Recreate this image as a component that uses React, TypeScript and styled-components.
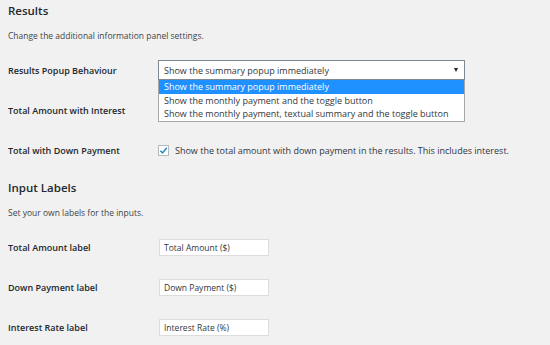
import styled, { createGlobalStyle } from "styled-components";

const GlobalStyle = createGlobalStyle`
    html, body {
        margin: 0;
        padding: 0;
        background: #f1f1f1;
    }
    body {
        font-family: "Open Sans", "Noto Sans", sans-serif;
        color: #23282d;
    }
`;

const Page = styled.div`
    padding: 0 8px;
    width: 534px;
`;

const Heading = styled.h2<{ top?: number }>`
    margin: ${props => props.top || 0}px 0 0;
    height: 22px;
    line-height: 22px;
    font-size: 11.5px;
    font-weight: 600;
    color: #23282d;
`;

const Description = styled.p`
    margin: 0;
    height: 28px;
    line-height: 28px;
    font-size: 8.5px;
    color: #444;
`;

const Table = styled.div`
    display: flex;
    flex-direction: column;
`;

const Row = styled.div`
    display: grid;
    grid-template-columns: 150px 1fr;
    align-items: center;
    height: 40px;
`;

const Label = styled.div`
    font-size: 9px;
    font-weight: 600;
    color: #23282d;
`;

const SelectWrap = styled.div`
    position: relative;
    width: 307px;
`;

const SelectBox = styled.div`
    box-sizing: border-box;
    height: 20px;
    border: 1px solid #7e8993;
    background: #fff;
    display: flex;
    align-items: center;
    justify-content: space-between;
    padding: 0 6px 0 5px;
    font-size: 9px;
    color: #32373c;
`;

const Arrow = styled.span`
    width: 0;
    height: 0;
    border-left: 2.5px solid transparent;
    border-right: 2.5px solid transparent;
    border-top: 4px solid #222;
`;

const Menu = styled.ul`
    position: absolute;
    left: 0;
    top: 20px;
    width: 307px;
    box-sizing: border-box;
    margin: 0;
    padding: 0;
    list-style: none;
    background: #fff;
    border: 1px solid #a8a8a8;
    border-top: none;
    z-index: 2;
`;

const Option = styled.li<{ active?: boolean }>`
    height: 13.5px;
    line-height: 13.5px;
    padding: 0 5px;
    font-size: 9px;
    background: ${props => props.active ? "#1e90ff" : "#fff"};
    color: ${props => props.active ? "#fff" : "#32373c"};
`;

const CheckLine = styled.label`
    display: flex;
    align-items: center;
    gap: 6px;
    font-size: 9px;
    color: #32373c;
`;

const Box = styled.span`
    box-sizing: border-box;
    width: 11px;
    height: 11px;
    border: 1px solid #b4b9be;
    background: #fff;
    display: flex;
    align-items: center;
    justify-content: center;
`;

const TextInput = styled.input`
    box-sizing: border-box;
    width: 110px;
    height: 17px;
    margin-left: 1px;
    border: 1px solid #ddd;
    background: #fff;
    padding: 0 4px;
    font-family: inherit;
    font-size: 8.5px;
    color: #32373c;
    outline: none;
`;

const options = [
    "Show the summary popup immediately",
    "Show the monthly payment and the toggle button",
    "Show the monthly payment, textual summary and the toggle button",
];

export default function App() {
    return (
        <Page>
            <GlobalStyle />
            <Heading>Results</Heading>
            <Description>Change the additional information panel settings.</Description>
            <Table>
                <Row>
                    <Label>Results Popup Behaviour</Label>
                    <SelectWrap>
                        <SelectBox>
                            <span>{options[0]}</span>
                            <Arrow />
                        </SelectBox>
                        <Menu>
                            {options.map((o, i) => (
                                <Option key={o} active={i === 0}>{o}</Option>
                            ))}
                        </Menu>
                    </SelectWrap>
                </Row>
                <Row>
                    <Label>Total Amount with Interest</Label>
                    <div />
                </Row>
                <Row>
                    <Label>Total with Down Payment</Label>
                    <CheckLine>
                        <Box>
                            <svg width="9" height="9" viewBox="0 0 10 10">
                                <path d="M1.5 5.2 L4 7.6 L8.6 2" fill="none" stroke="#1e8cbe" strokeWidth="1.6" />
                            </svg>
                        </Box>
                        Show the total amount with down payment in the results. This includes interest.
                    </CheckLine>
                </Row>
            </Table>
            <Heading top={7}>Input Labels</Heading>
            <Description>Set your own labels for the inputs.</Description>
            <Table>
                <Row>
                    <Label>Total Amount label</Label>
                    <TextInput defaultValue="Total Amount ($)" />
                </Row>
                <Row>
                    <Label>Down Payment label</Label>
                    <TextInput defaultValue="Down Payment ($)" />
                </Row>
                <Row>
                    <Label>Interest Rate label</Label>
                    <TextInput defaultValue="Interest Rate (%)" />
                </Row>
            </Table>
        </Page>
    );
}
